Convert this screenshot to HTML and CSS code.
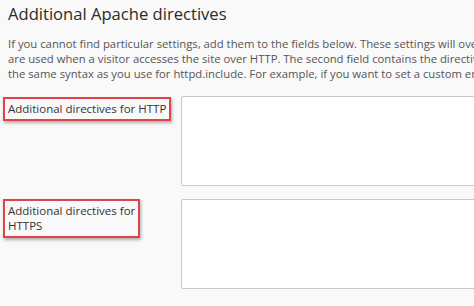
FILE: index.html
```html
<!DOCTYPE html>
<html lang="en">
<head>
  <meta charset="UTF-8">
  <title>Additional Apache directives</title>
  <link rel="stylesheet" href="styles.css">
</head>
<body>

  <div class="page">
    <h2>Additional Apache directives</h2>

    <p class="hint">
      If you cannot find particular settings, add them to the fields below. These settings will override the ones set by Plesk. The first field contains the directives that<br>
      are used when a visitor accesses the site over HTTP. The second field contains the directives for HTTPS. Use<br>
      the same syntax as you use for httpd.include. For example, if you want to set a custom error document
    </p>

    <div class="form-row">
      <div class="label-cell">
        <label class="marked" for="httpDirectives">Additional directives for HTTP</label>
      </div>
      <textarea id="httpDirectives"></textarea>
    </div>

    <div class="form-row">
      <div class="label-cell">
        <label class="marked" for="httpsDirectives">Additional directives for<br>HTTPS</label>
      </div>
      <textarea id="httpsDirectives"></textarea>
    </div>
  </div>

</body>
</html>
```

FILE: styles.css
```css
html, body {
  margin: 0;
  overflow: hidden;
}

body {
  font-family: "Open Sans", "Noto Sans", sans-serif;
  background: #f9f9f9;
  color: #333;
}

.page {
  padding: 0 0 0 8px;
  width: 900px;
}

h2 {
  font-size: 16.6px;
  font-weight: 500;
  line-height: 24px;
  margin: 0;
  padding-top: 2px;
  color: #2b2b2b;
}

.hint {
  font-size: 11.3px;
  line-height: 15px;
  color: #555;
  white-space: nowrap;
  margin: 10px 0 0;
}

.form-row {
  display: grid;
  grid-template-columns: 173px 600px;
  margin-top: 13px;
}

.hint + .form-row {
  margin-top: 15px;
}

.marked {
  display: inline-block;
  white-space: nowrap;
  font-size: 11.5px;
  line-height: 15px;
  color: #333;
  margin-left: -5px;
  padding: 2px 3px 3px;
  border: 2px solid #e2434b;
  box-shadow: 1px 2px 3px rgba(0, 0, 0, 0.3);
}

textarea {
  height: 90px;
  box-sizing: border-box;
  background: #fff;
  border: 1px solid #c8c8c8;
  border-radius: 2px;
  resize: none;
}
```
